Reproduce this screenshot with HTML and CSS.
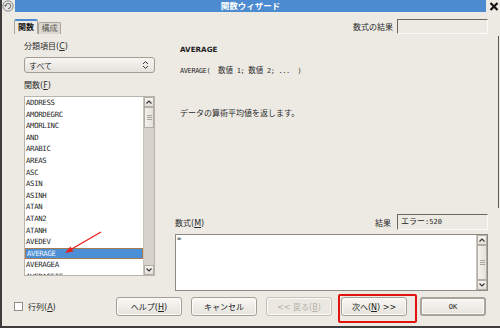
FILE: index.html
```html
<!DOCTYPE html>
<html lang="ja">
<head>
    <meta charset="UTF-8">
    <title>関数ウィザード</title>
    <link rel="stylesheet" href="styles.css">
</head>
<body>
<div class="window">
    <div class="titlebar">
        <svg class="win-icon" width="12" height="12" viewBox="0 0 12 12">
            <circle cx="6" cy="6" r="5.2" fill="#e4e4e4" stroke="#8a8a8a" stroke-width="1"/>
            <path d="M3.5 6 A2.6 2.6 0 1 1 6 8.6" fill="none" stroke="#6a6a6a" stroke-width="1"/>
            <path d="M2.4 5 L3.5 6.6 L4.8 5.2" fill="none" stroke="#6a6a6a" stroke-width="0.9"/>
        </svg>
        <div class="title">関数ウィザード</div>
        <svg class="close" width="10" height="9" viewBox="0 0 10 9">
            <path d="M1.5 1 L8.5 8 M8.5 1 L1.5 8" stroke="#111" stroke-width="2.2"/>
        </svg>
    </div>

    <div class="main">
        <div class="left">
            <div class="tabs">
                <span class="tab active">関数</span>
                <span class="tab">構成</span>
            </div>
            <div class="panel">
                <div class="label">分類項目(<u>C</u>)</div>
                <div class="select">
                    <span>すべて</span>
                    <svg width="7" height="10" viewBox="0 0 7 10">
                        <path d="M1 4 L3.5 1.5 L6 4 M1 6 L3.5 8.5 L6 6" fill="none" stroke="#333" stroke-width="1"/>
                    </svg>
                </div>
                <div class="label">関数(<u>F</u>)</div>
                <div class="listbox">
                    <ul class="items">
                        <li>ADDRESS</li>
                        <li>AMORDEGRC</li>
                        <li>AMORLINC</li>
                        <li>AND</li>
                        <li>ARABIC</li>
                        <li>AREAS</li>
                        <li>ASC</li>
                        <li>ASIN</li>
                        <li>ASINH</li>
                        <li>ATAN</li>
                        <li>ATAN2</li>
                        <li>ATANH</li>
                        <li>AVEDEV</li>
                        <li class="selected">AVERAGE</li>
                        <li>AVERAGEA</li>
                        <li>AVERAGEIF</li>
                    </ul>
                    <div class="vscroll">
                        <span class="arrow">
                            <svg width="6" height="4" viewBox="0 0 6 4"><path d="M0.5 3.5 L3 1 L5.5 3.5" fill="none" stroke="#333" stroke-width="1.1"/></svg>
                        </span>
                        <span class="thumb short"><i></i><i></i><i></i></span>
                        <span class="trough"></span>
                        <span class="arrow">
                            <svg width="6" height="4" viewBox="0 0 6 4"><path d="M0.5 0.5 L3 3 L5.5 0.5" fill="none" stroke="#333" stroke-width="1.1"/></svg>
                        </span>
                    </div>
                </div>
            </div>
        </div>

        <div class="right">
            <div class="result-row">
                <span>数式の結果</span>
                <div class="field"></div>
            </div>
            <div class="fname">AVERAGE</div>
            <div class="syntax">AVERAGE(  <span class="cj">数値</span> 1; <span class="cj">数値</span> 2; ...  )</div>
            <div class="desc">データの算術平均値を返します。</div>

            <div class="formula-head">
                <span class="label">数式(<u>M</u>)</span>
                <span class="res-label">結果</span>
                <div class="field">エラー<span class="mono">:520</span></div>
            </div>
            <div class="formula">
                <div class="formula-text">=</div>
                <div class="vscroll">
                    <span class="arrow">
                        <svg width="6" height="4" viewBox="0 0 6 4"><path d="M0.5 3.5 L3 1 L5.5 3.5" fill="none" stroke="#333" stroke-width="1.1"/></svg>
                    </span>
                    <span class="thumb full"><i></i><i></i><i></i></span>
                    <span class="arrow">
                        <svg width="6" height="4" viewBox="0 0 6 4"><path d="M0.5 0.5 L3 3 L5.5 0.5" fill="none" stroke="#333" stroke-width="1.1"/></svg>
                    </span>
                </div>
            </div>
        </div>

        <div class="edge"></div>
    </div>

    <div class="footer">
        <label class="check"><span class="box"></span><span>行列(<u>A</u>)</span></label>
        <div class="buttons">
            <button>ヘルプ(<u>H</u>)</button>
            <button>キャンセル</button>
            <button disabled>&lt;&lt; 戻る(<u>B</u>)</button>
            <button>次へ(<u>N</u>) &gt;&gt;</button>
            <button class="default">OK</button>
        </div>
    </div>

    <!-- annotations drawn over the screenshot -->
    <div class="mark"></div>
    <svg class="pointer" width="45" height="30" viewBox="0 0 45 30">
        <path d="M41 4 L10 22" stroke="#e8201c" stroke-width="1.3"/>
        <polygon points="5,25 10.4,18.4 13.4,23.6" fill="#e8201c"/>
    </svg>
</div>
</body>
</html>
```

FILE: styles.css
```css
body {
    margin: 0;
    font-family: "DejaVu Sans", "Noto Sans CJK JP", sans-serif;
    font-size: 8px;
    color: #2b2b2b;
}
.window {
    position: relative;
    width: 500px;
    height: 328px;
    box-sizing: border-box;
    border-left: 2px solid #3d3d3d;
    border-bottom: 2px solid #3d3d3d;
    background: #edeae4;
    display: flex;
    flex-direction: column;
    overflow: hidden;
}
u {
    text-decoration: underline;
    text-underline-offset: 1px;
}

/* title bar */
.titlebar {
    height: 12px;
    display: flex;
    align-items: center;
}
.title {
    flex: 1;
    height: 12px;
    margin-left: 1px;
    background: #4c8bd0;
    color: #fff;
    font-weight: bold;
    font-size: 8.5px;
    line-height: 12px;
    text-align: center;
}
.close {
    margin: 0 1px 0 3px;
}

/* main area */
.main {
    flex: 1;
    display: flex;
    padding-top: 7px;
}
.left {
    width: 141px;
    margin-left: 12px;
}
.tabs {
    height: 15px;
    display: flex;
    align-items: flex-end;
}
.tab {
    height: 12px;
    width: 23px;
    box-sizing: border-box;
    border: 1px solid #aaa69e;
    border-bottom: none;
    background: #dcd8cf;
    color: #5a5a5a;
    line-height: 11px;
    text-align: center;
    border-radius: 2px 2px 0 0;
}
.tab.active {
    height: 15px;
    width: 24px;
    border-top: 2px solid #4c8bd0;
    background: #edeae4;
    color: #111;
    font-weight: bold;
    line-height: 13px;
}
.panel {
    padding-left: 10px;
}
.label {
    height: 10px;
    line-height: 10px;
    margin-top: 8px;
}
.panel .label + .select {
    margin-top: 5px;
}
.select {
    height: 16px;
    box-sizing: border-box;
    border: 1px solid #a29e96;
    border-radius: 3px;
    background: linear-gradient(#f7f6f3, #e5e2db);
    display: flex;
    align-items: center;
    justify-content: space-between;
    padding: 0 5px 0 4px;
    margin-bottom: 1px;
}
.listbox {
    margin-top: 5px;
    height: 180px;
    box-sizing: border-box;
    border: 1px solid #b9b5ad;
    display: flex;
    background: #fff;
}
.items {
    list-style: none;
    margin: 0;
    padding: 0;
    flex: 1;
    overflow: hidden;
    font-family: "DejaVu Sans Mono", monospace;
    font-size: 7.3px;
    letter-spacing: -0.3px;
    color: #1c1c1c;
}
.items li {
    height: 11.6px;
    line-height: 11.6px;
    padding-left: 1px;
    box-sizing: border-box;
}
.items li.selected {
    background: #4b8fd6;
    color: #f2f6fb;
    border: 1px solid #a57a4e;
    line-height: 9.6px;
}

/* scrollbars */
.vscroll {
    width: 10px;
    display: flex;
    flex-direction: column;
    background: #d7d2c9;
    border-left: 1px solid #c9c4ba;
}
.vscroll .arrow {
    height: 10px;
    box-sizing: border-box;
    border: 1px solid #b3aea4;
    background: linear-gradient(#f5f4f1, #e3e0d9);
    display: flex;
    align-items: center;
    justify-content: center;
}
.vscroll .thumb {
    box-sizing: border-box;
    border: 1px solid #b3aea4;
    background: linear-gradient(90deg, #f3f2ee, #e4e1da);
    display: flex;
    flex-direction: column;
    align-items: center;
    justify-content: center;
    gap: 1px;
}
.vscroll .thumb i {
    display: block;
    width: 5px;
    height: 1px;
    background: #aaa59b;
}
.thumb.short {
    height: 21px;
}
.thumb.full {
    flex: 1;
}
.vscroll .trough {
    flex: 1;
}

/* right column */
.right {
    width: 313px;
    margin-left: 20px;
    height: 272px;
    display: flex;
    flex-direction: column;
}
.result-row {
    height: 15px;
    display: flex;
    align-items: center;
    justify-content: flex-end;
    gap: 4px;
}
.field {
    width: 91px;
    height: 15px;
    box-sizing: border-box;
    border-top: 1px solid #6a675f;
    border-left: 1px solid #6a675f;
    border-bottom: 1px solid #fbfaf8;
    border-right: 1px solid #fbfaf8;
    background: #edeae4;
    padding-left: 3px;
    line-height: 13px;
}
.mono {
    font-family: "DejaVu Sans Mono", monospace;
    font-size: 7px;
}
.fname {
    margin: 11px 0 0 5px;
    height: 10px;
    line-height: 10px;
    font-weight: bold;
    font-size: 7.2px;
    color: #1e1e1e;
}
.syntax {
    margin: 10px 0 0 5px;
    height: 10px;
    line-height: 10px;
    white-space: pre;
    font-family: "DejaVu Sans Mono", monospace;
    font-size: 6.9px;
    letter-spacing: -0.35px;
}
.syntax .cj {
    font-family: "Noto Sans CJK JP", sans-serif;
    font-size: 7.5px;
    letter-spacing: 0;
}
.desc {
    margin: 34px 0 0 5px;
    height: 10px;
    line-height: 10px;
}
.formula-head {
    margin-top: auto;
    height: 16px;
    display: flex;
    align-items: center;
}
.formula-head .label {
    margin: 4px 0 0 0;
    flex: 1;
}
.formula-head .res-label {
    margin-right: 6px;
}
.formula-head .field {
    height: 16px;
    line-height: 14px;
}
.formula {
    margin-top: 4px;
    height: 57px;
    box-sizing: border-box;
    border: 1px solid #8d8a83;
    background: #fff;
    display: flex;
}
.formula-text {
    flex: 1;
    padding: 0 1px;
    font-family: "DejaVu Sans Mono", monospace;
    font-size: 7px;
    line-height: 9px;
}
.edge {
    width: 1px;
    height: 172px;
    margin: 17px 1px 0 auto;
    background: #5c5a56;
}

/* footer */
.footer {
    height: 35px;
    box-sizing: border-box;
    padding: 6px 0 0 12px;
    display: flex;
}
.check {
    display: flex;
    align-items: center;
    gap: 5px;
    height: 19px;
    width: 102px;
}
.check .box {
    width: 9px;
    height: 9px;
    box-sizing: border-box;
    border: 1px solid #8e8b85;
    background: #fff;
}
.buttons {
    display: flex;
    gap: 9px;
}
button {
    width: 66px;
    height: 19px;
    padding: 0;
    font: inherit;
    color: #222;
    border: 1px solid #a39f97;
    border-radius: 3px;
    background: linear-gradient(#f8f7f5, #e6e3dc);
    box-shadow: inset 0 0 0 1px #fbfaf8;
}
button:disabled {
    color: #b3b0a9;
    border-color: #c6c2ba;
    background: #ebe8e2;
}
button.default {
    margin-left: 4px;
    border: 2px solid #a8a49b;
    font-family: "DejaVu Sans Mono", monospace;
    font-size: 7px;
}

/* red annotations */
.mark {
    position: absolute;
    left: 336px;
    top: 294px;
    width: 75px;
    height: 25px;
    border: 2px solid #e0130f;
    border-radius: 2px;
}
.pointer {
    position: absolute;
    left: 58px;
    top: 228px;
}
```
